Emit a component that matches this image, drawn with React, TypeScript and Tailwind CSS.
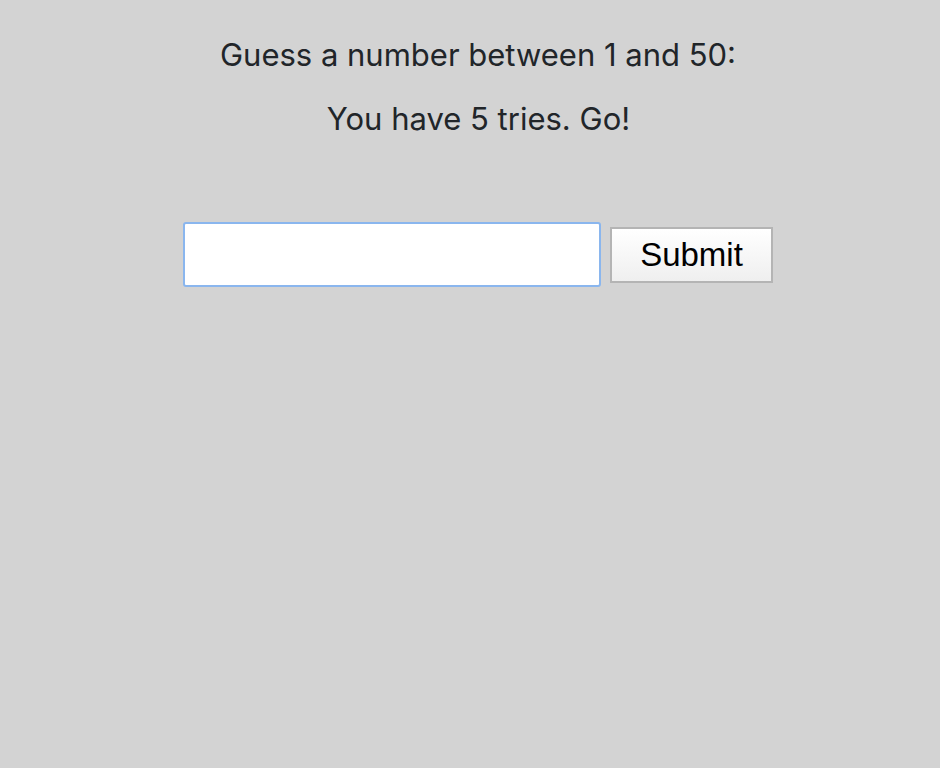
export default function App() {
  return (
    <div className="min-h-[768px] w-full bg-[#d3d3d3] font-['Inter',sans-serif] text-[#212529]">
      <div className="flex flex-col items-center pt-[36px]">
        <p className="text-[31px] leading-[38px] m-0 ml-[16px]">Guess a number between 1 and 50:</p>
        <p className="text-[31px] leading-[38px] mt-[26px] ml-[17px]">You have 5 tries. Go!</p>
        <form className="flex items-center gap-[9px] mt-[84px] ml-[16px]" onSubmit={(e) => e.preventDefault()}>
          <input
            type="text"
            className="w-[418px] h-[65px] bg-white border-2 border-[#8ab6ee] rounded-[3px] outline-none px-2 text-[28px]"
          />
          <button
            type="submit"
            className="w-[163px] h-[56px] border-2 border-[#b4b4b4] bg-gradient-to-b from-white to-[#efefef] text-black text-[33px] font-['Liberation_Sans',Arial,sans-serif]"
          >
            Submit
          </button>
        </form>
      </div>
    </div>
  );
}
